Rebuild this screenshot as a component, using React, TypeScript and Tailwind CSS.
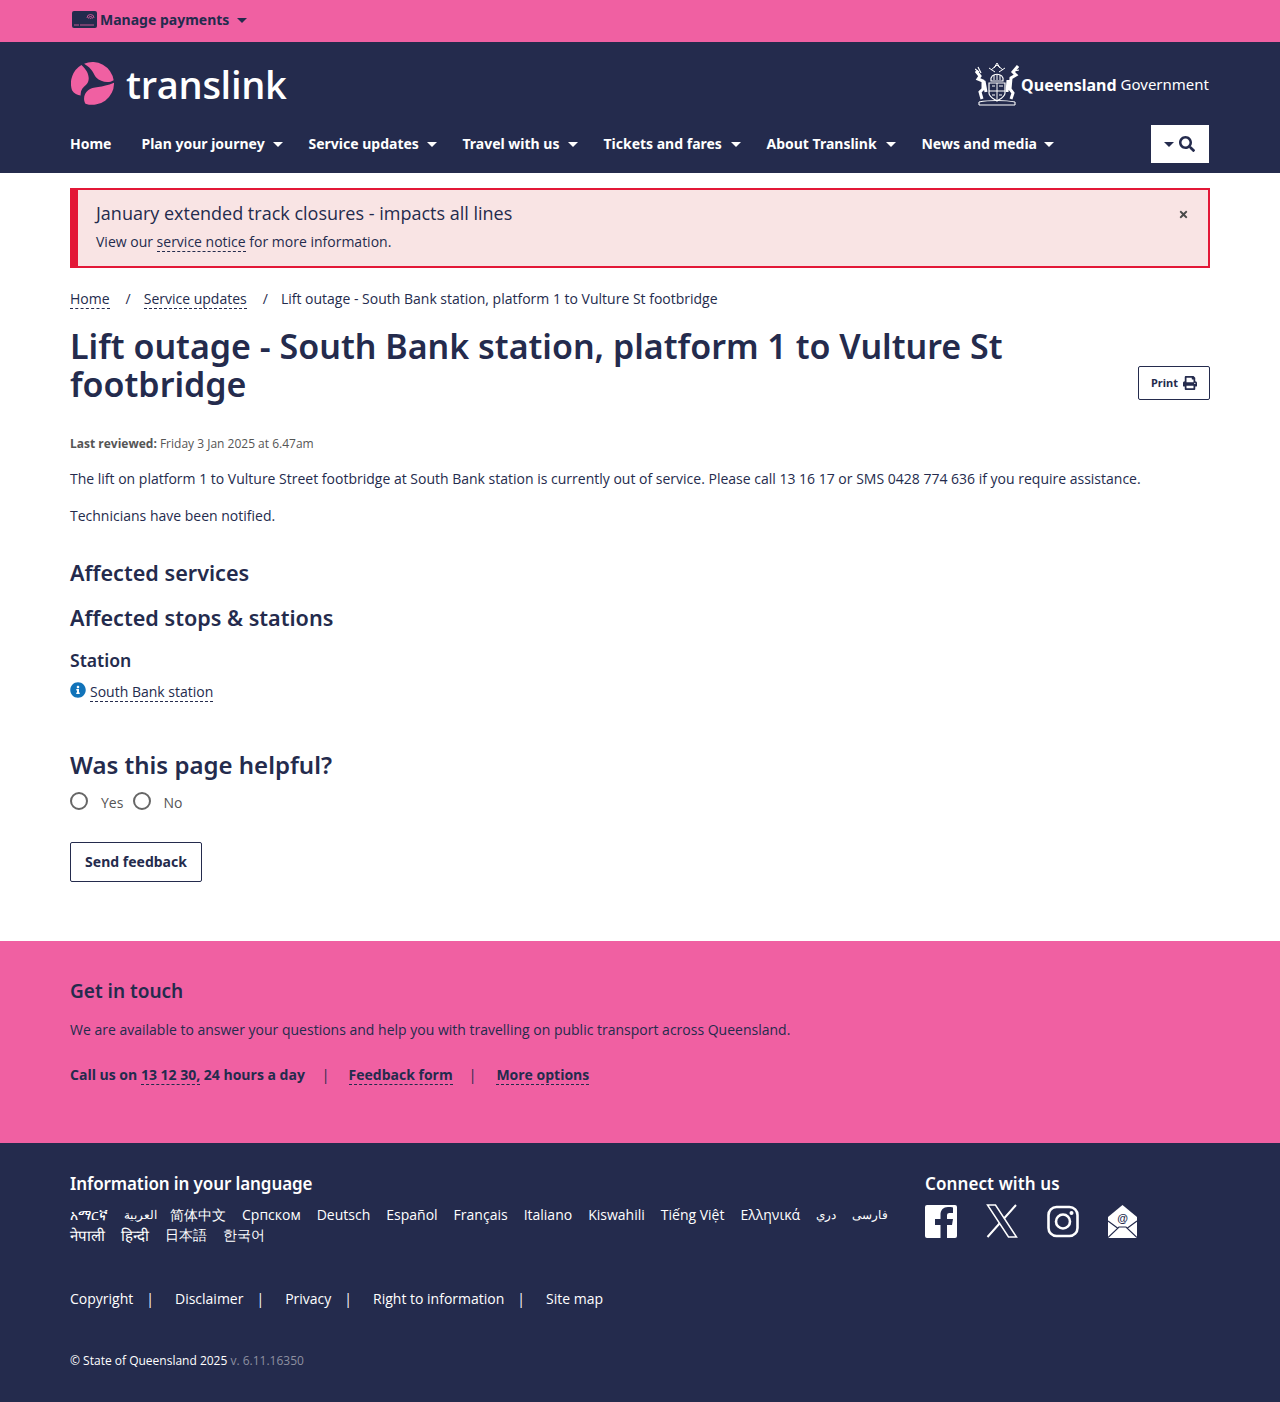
import React from 'react'
import { FaSearch, FaPrint, FaInfoCircle, FaTimes } from 'react-icons/fa'

const headingFont = "[font-family:'Noto_Sans',sans-serif]"

const navItems = [
  { label: 'Plan your journey', width: 'w-[142px]' },
  { label: 'Service updates', width: 'w-[129px]' },
  { label: 'Travel with us', width: 'w-[116px]' },
  { label: 'Tickets and fares', width: 'w-[138px]' },
  { label: 'About Translink', width: 'w-[130px]' },
  { label: 'News and media', width: 'w-[133px]' },
]

const languages = [
  { label: 'አማርኛ', className: '' },
  { label: 'العربية', className: '-mr-[3px] text-[11.5px]' },
  { label: '简体中文', className: '' },
  { label: 'Српском', className: '' },
  { label: 'Deutsch', className: '' },
  { label: 'Español', className: '' },
  { label: 'Français', className: '' },
  { label: 'Italiano', className: '' },
  { label: 'Kiswahili', className: '' },
  { label: 'Tiếng Việt', className: '' },
  { label: 'Ελληνικά', className: '' },
  { label: 'دري', className: 'text-[11.5px]' },
  { label: 'فارسی', className: 'text-[11.5px]' },
  { label: 'नेपाली', className: 'text-[15px]' },
  { label: 'हिन्दी', className: 'text-[15px]' },
  { label: '日本語', className: '' },
  { label: '한국어', className: '' },
]

const footerLinks = ['Copyright', 'Disclaimer', 'Privacy', 'Right to information', 'Site map']

function Caret({ className = '' }: { className?: string }) {
  return <span className={`inline-block h-0 w-0 border-x-[5px] border-t-[5px] border-x-transparent ${className}`} />
}

function Dashed({ children }: { children: React.ReactNode }) {
  return <a className="border-b border-dashed border-[#242b4d]">{children}</a>
}

function TranslinkLogo() {
  return (
    <svg width="43" height="43" viewBox="33 24 128 128" className="ml-px shrink-0" fill="#f060a2">
      <path d="M64 33 A64 64 0 0 0 36 108 C42 118 52 122 62 124 C60 110 68 100 78 92 C90 80 90 56 64 33 Z" />
      <path d="M72 29 A64 64 0 0 1 160 78 C145 88 122 84 108 70 C100 60 98 44 72 29 Z" />
      <path d="M161 86 A64 64 0 0 1 76 148 C68 135 72 118 84 108 C98 96 125 102 161 86 Z" />
    </svg>
  )
}

function CrestIcon() {
  return (
    <svg width="44" height="44" viewBox="0 0 44 44" fill="none" stroke="#fff" className="shrink-0">
      {/* stag on the left, lion on the right */}
      <path d="M1 9 L5 14 L3 17 L8 19 L8 27 L5 30 L7 37 M9 19 L11 30" strokeWidth="3" />
      <path d="M43 4 L38 10 L41 13 L36 16 L35 27 L38 31 L36 37 M33 18 L32 30" strokeWidth="3" />
      <path d="M0 7 L4 10 M3 5 L6 11 M44 8 L39 9" strokeWidth="1.2" />
      {/* shield */}
      <path d="M14 21 H30 V31 C30 35 25 37 22 39 C19 37 14 35 14 31 Z" fill="#242b4d" strokeWidth="1.2" />
      <path d="M22 21 V38 M14 29 H30 M17 24 H20 M24 24 H28 M17 33 H20 M24 33 H27" strokeWidth="1" />
      {/* helmet and crest */}
      <path d="M16 19 C14 10 30 10 28 19 Z" strokeWidth="1.2" />
      <path d="M19 13 V18 M22 12 V18 M25 13 V18 M16 8 L22 3 L28 8 M19 6 L22 1 L25 6 M14 6 L20 10 M30 6 L24 10" strokeWidth="1" />
      {/* plinth */}
      <path d="M4 40 C14 38 30 38 40 40 M4 43 H40 M4 40 V43 M40 40 V43" strokeWidth="1.1" />
    </svg>
  )
}

function FacebookIcon() {
  return (
    <svg width="32" height="33" viewBox="0 0 32 33" className="shrink-0">
      <path
        fill="#fff"
        fillRule="evenodd"
        d="M2 0 H30 A2 2 0 0 1 32 2 V31 A2 2 0 0 1 30 33 H22 V20 H27 L28 14 H22 V10.5 C22 8.8 22.8 8 24.5 8 H28 V2.5 C27 2.3 25 2 23 2 C18.5 2 15.5 5 15.5 9.5 V14 H10 V20 H15.5 V33 H2 A2 2 0 0 1 0 31 V2 A2 2 0 0 1 2 0 Z"
      />
    </svg>
  )
}

function XIcon() {
  return (
    <svg width="32" height="34" viewBox="0 0 32 34" fill="none" stroke="#fff" className="shrink-0">
      <path d="M1.5 1 H9.5 L30.5 33 H22.5 Z" strokeWidth="1.5" />
      <path d="M30 1 L18 14.5 M13.5 19.5 L1.5 33" strokeWidth="2" />
    </svg>
  )
}

function InstagramIcon() {
  return (
    <svg width="32" height="33" viewBox="0 0 32 33" fill="none" stroke="#fff" className="shrink-0">
      <rect x="1.5" y="2" width="29" height="29" rx="8" strokeWidth="2.6" />
      <circle cx="16" cy="16.5" r="7" strokeWidth="2.6" />
      <circle cx="24.5" cy="8" r="2" fill="#fff" stroke="none" />
    </svg>
  )
}

function MailIcon() {
  return (
    <svg width="29" height="33" viewBox="0 0 29 33" className="shrink-0">
      <path d="M14.5 0 L29 12 V33 H0 V12 Z" fill="#fff" />
      <path d="M0 32.5 L11 22 H18 L29 32.5 M0 16 L9.5 23 M29 16 L19.5 23" stroke="#242b4d" strokeWidth="1.2" fill="none" />
      <text x="14.5" y="17" textAnchor="middle" fontSize="11" fontWeight="700" fill="#242b4d" fontFamily="Liberation Sans, sans-serif">@</text>
    </svg>
  )
}

function CardIcon() {
  return (
    <svg width="25" height="18" viewBox="0 0 25 18" className="shrink-0">
      <rect width="25" height="17" rx="2" fill="#242b4d" />
      <path d="M2 14 H7 M8 14 H22" stroke="#f060a2" strokeWidth="0.8" />
      <path d="M15 7 a3.5 3.5 0 0 1 7 0 M16.5 7.5 a2 2 0 0 1 4 0 M18 8 a.6 .6 0 0 1 1.2 0" stroke="#f060a2" strokeWidth="0.8" fill="none" />
    </svg>
  )
}

export default function App() {
  return (
    <div className="min-h-[1402px] bg-white font-['Open_Sans',sans-serif] text-sm text-[#242b4d]">
      {/* Top bar */}
      <div className="h-[42px] bg-[#f060a2]">
        <div className="mx-auto flex h-[40px] w-[1140px] items-center pl-[2px]">
          <CardIcon />
          <span className={`ml-[3px] text-sm font-bold ${headingFont}`}>Manage payments</span>
          <Caret className="ml-[8px] border-t-[#242b4d]" />
        </div>
      </div>

      {/* Header */}
      <header className="h-[131px] bg-[#242b4d] text-white">
        <div className="mx-auto w-[1140px]">
          <div className="flex h-[83px] items-center justify-between">
            <div className="flex items-center gap-[12px]">
              <TranslinkLogo />
              <span className="text-[38px] leading-none font-semibold tracking-[-0.3px]">translink</span>
            </div>
            <div className="flex items-center pr-px">
              <CrestIcon />
              <span className={`mt-[2px] ml-[2px] text-base font-bold ${headingFont}`}>Queensland</span>
              <span className={`mt-[2px] ml-[4px] text-[15px] font-normal ${headingFont}`}>Government</span>
            </div>
          </div>
          <nav className="flex items-start justify-between pr-px">
            <div className={`flex h-[38px] items-center gap-[30px] text-sm font-bold ${headingFont}`}>
              <a>Home</a>
              <div className="flex items-center gap-[25px]">
                {navItems.map(item => (
                  <a key={item.label} className={`flex items-center justify-between whitespace-nowrap ${item.width}`}>
                    {item.label}
                    <Caret className="border-t-white" />
                  </a>
                ))}
              </div>
            </div>
            <button className="flex h-[38px] w-[58px] items-center justify-center gap-[5px] bg-white pr-px text-[#242b4d]">
              <Caret className="border-t-[#242b4d]" />
              <FaSearch className="text-[16px]" />
            </button>
          </nav>
        </div>
      </header>

      <main className="mx-auto w-[1140px]">
        {/* Alert */}
        <div className="relative mt-[15px] h-[80px] border-2 border-l-[8px] border-[#e31837] bg-[#f9e4e4] pt-[11px] pl-[18px]">
          <p className="text-lg leading-[24px]">January extended track closures - impacts all lines</p>
          <p className="mt-[6px] leading-[21px]">
            View our <Dashed>service notice</Dashed> for more information.
          </p>
          <FaTimes className="absolute top-[19px] right-[19px] text-[11px] text-[#4a4a4a]" />
        </div>

        {/* Breadcrumb */}
        <div className="mt-[21px] flex h-[20px] items-center">
          <span><Dashed>Home</Dashed></span>
          <span className="mr-[13px] ml-[16px]">/</span>
          <span><Dashed>Service updates</Dashed></span>
          <span className="mr-[13px] ml-[16px]">/</span>
          <span>Lift outage - South Bank station, platform 1 to Vulture St footbridge</span>
        </div>

        {/* Title */}
        <div className="mt-[18px] flex items-end justify-between">
          <h1 className={`w-[960px] text-[34px] leading-[38px] font-semibold ${headingFont}`}>
            Lift outage - South Bank station, platform 1 to Vulture St footbridge
          </h1>
          <button className={`mb-[3px] flex h-[34px] w-[72px] items-center justify-center gap-[5px] rounded-[2px] border border-[#242b4d] text-[11px] font-bold ${headingFont}`}>
            Print <FaPrint className="text-[14px]" />
          </button>
        </div>

        <p className="mt-[32px] h-[18px] text-xs leading-[18px] text-[#555]">
          <strong className="font-bold">Last reviewed:</strong> Friday 3 Jan 2025 at 6.47am
        </p>
        <p className="mt-[15px] leading-[21px]">
          The lift on platform 1 to Vulture Street footbridge at South Bank station is currently out of service. Please call 13 16 17 or SMS 0428 774 636 if you require assistance.
        </p>
        <p className="mt-[16px] leading-[21px]">Technicians have been notified.</p>

        <h2 className={`mt-[32px] text-[21.6px] leading-[30px] font-semibold ${headingFont}`}>Affected services</h2>
        <h2 className={`mt-[15px] text-[21.6px] leading-[30px] font-semibold ${headingFont}`}>Affected stops &amp; stations</h2>
        <h3 className={`mt-[15px] text-[17.6px] leading-[24px] font-semibold ${headingFont}`}>Station</h3>
        <div className="mt-[8px] flex h-[24px] items-center gap-[4px]">
          <FaInfoCircle className="mb-[4px] text-base text-[#1173b9]" />
          <span><Dashed>South Bank station</Dashed></span>
        </div>

        <h2 className={`mt-[45px] text-2xl leading-[32px] font-semibold ${headingFont}`}>Was this page helpful?</h2>
        <div className="mt-[8px] flex h-[24px] items-center">
          <span className="h-[18px] w-[18px] rounded-full border-2 border-[#666]" />
          <span className="mt-[4px] ml-[13px] text-[#555]">Yes</span>
          <span className="ml-[10px] h-[18px] w-[18px] rounded-full border-2 border-[#666]" />
          <span className="mt-[4px] ml-[12px] text-[#555]">No</span>
        </div>
        <button className={`mt-[29px] h-[40px] w-[132px] rounded-[2px] border border-[#242b4d] text-sm font-bold ${headingFont}`}>
          Send feedback
        </button>
      </main>

      {/* Get in touch */}
      <section className="mt-[59px] h-[202px] bg-[#f060a2]">
        <div className="mx-auto w-[1140px] pt-[36px]">
          <h2 className={`text-[19px] leading-[28px] font-semibold ${headingFont}`}>Get in touch</h2>
          <p className="mt-[14px] leading-[21px]">
            We are available to answer your questions and help you with travelling on public transport across Queensland.
          </p>
          <div className="mt-[24px] flex h-[21px] items-center font-bold">
            <span>Call us on <Dashed>13 12 30,</Dashed> 24 hours a day</span>
            <span className="mr-[19px] ml-[17px] font-normal">|</span>
            <span><Dashed>Feedback form</Dashed></span>
            <span className="mr-[20px] ml-[16px] font-normal">|</span>
            <span><Dashed>More options</Dashed></span>
          </div>
        </div>
      </section>

      {/* Footer */}
      <footer className="h-[259px] bg-[#242b4d] text-white">
        <div className="mx-auto w-[1140px] pt-[29px]">
          <div className="flex">
            <div className="w-[855px]">
              <h2 className={`text-[17px] leading-[24px] font-semibold tracking-[-0.1px] ${headingFont}`}>Information in your language</h2>
              <ul className="mt-[9px] flex h-[40px] w-[830px] flex-wrap items-center gap-x-[16px] leading-[20px]">
                {languages.map(lang => (
                  <li key={lang.label} className={lang.className}>{lang.label}</li>
                ))}
              </ul>
            </div>
            <div>
              <h2 className={`text-[17px] leading-[24px] font-semibold tracking-[0.1px] ${headingFont}`}>Connect with us</h2>
              <div className="mt-[8px] flex items-center gap-[29px]">
                <FacebookIcon />
                <XIcon />
                <InstagramIcon />
                <MailIcon />
              </div>
            </div>
          </div>
          <div className="mt-[43px] flex h-[21px] items-center">
            {footerLinks.map((link, index) => (
              <span key={link} className="flex items-center">
                {link}
                {index < footerLinks.length - 1 && <span className="mr-[21px] ml-[13px]">|</span>}
              </span>
            ))}
          </div>
          <p className="mt-[43px] text-xs leading-[18px]">
            © State of Queensland 2025 <span className="text-[#8d90a0]">v. 6.11.16350</span>
          </p>
        </div>
      </footer>
    </div>
  )
}
